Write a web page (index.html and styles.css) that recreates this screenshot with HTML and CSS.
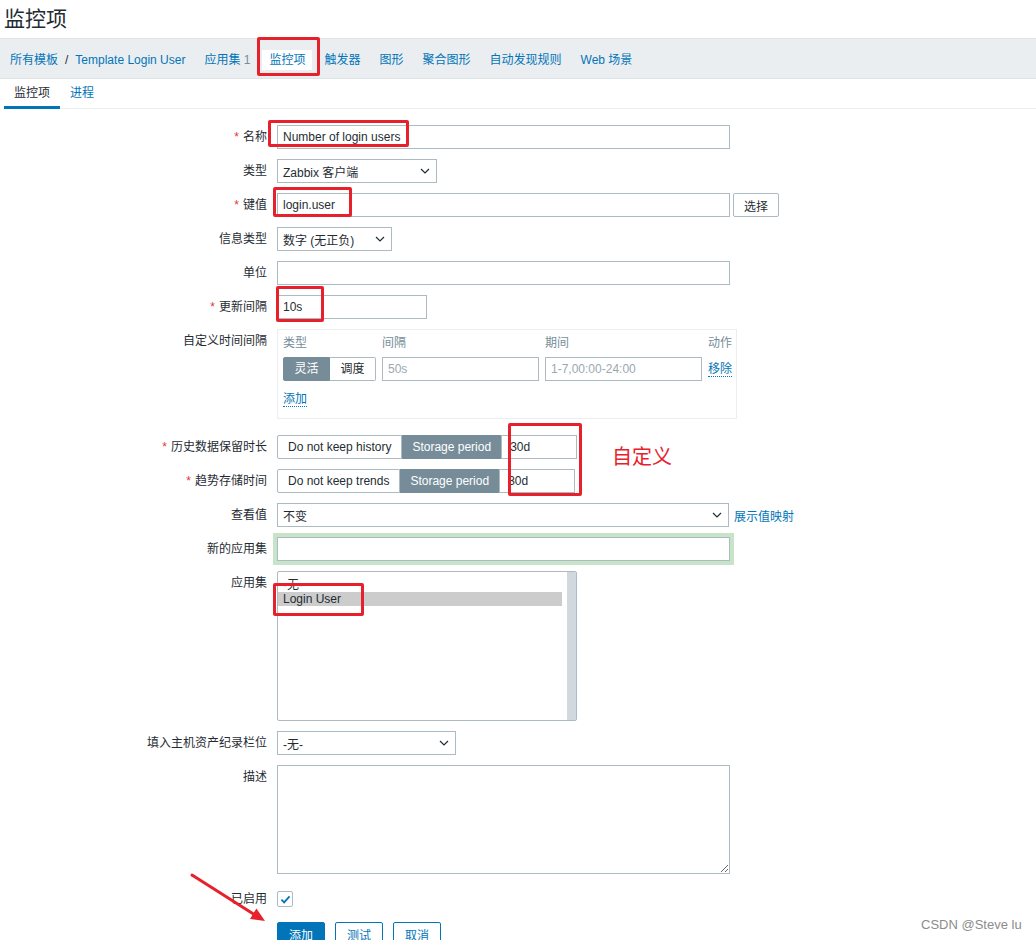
FILE: index.html
```html
<!DOCTYPE html>
<html lang="zh-CN">
<head>
  <meta charset="UTF-8">
  <meta name="viewport" content="width=device-width, initial-scale=1.0">
  <title>监控项</title>
  <link rel="stylesheet" href="styles.css">
</head>
<body>

  <h1 class="page-title">监控项</h1>

  <!-- object navigation -->
  <nav class="object-nav">
    <ul>
      <li class="breadcrumbs"><a href="#">所有模板</a><span class="sep">/</span><a href="#">Template Login User</a></li>
      <li><a href="#">应用集 <span class="count">1</span></a></li>
      <li class="selected"><a href="#">监控项</a></li>
      <li><a href="#">触发器</a></li>
      <li><a href="#">图形</a></li>
      <li><a href="#">聚合图形</a></li>
      <li><a href="#">自动发现规则</a></li>
      <li><a href="#">Web 场景</a></li>
    </ul>
  </nav>

  <div class="tabs">
    <a href="#" class="tab active">监控项</a>
    <a href="#" class="tab">进程</a>
  </div>

  <!-- ITEM FORM -->
  <form class="item-form">
    <ul class="form-list">
      <li class="form-row">
        <label class="form-label required">名称</label>
        <div class="form-field"><input class="input input-wide" type="text" value="Number of login users"></div>
      </li>
      <li class="form-row">
        <label class="form-label">类型</label>
        <div class="form-field">
          <div class="select select-type">Zabbix 客户端<svg viewBox="0 0 10 6"><path d="M1 1l4 4 4-4"/></svg></div>
        </div>
      </li>
      <li class="form-row">
        <label class="form-label required">键值</label>
        <div class="form-field">
          <input class="input input-wide" type="text" value="login.user">
          <button type="button" class="btn-alt btn-select">选择</button>
        </div>
      </li>
      <li class="form-row">
        <label class="form-label">信息类型</label>
        <div class="form-field">
          <div class="select select-info">数字 (无正负)<svg viewBox="0 0 10 6"><path d="M1 1l4 4 4-4"/></svg></div>
        </div>
      </li>
      <li class="form-row">
        <label class="form-label">单位</label>
        <div class="form-field"><input class="input input-wide" type="text"></div>
      </li>
      <li class="form-row">
        <label class="form-label required">更新间隔</label>
        <div class="form-field"><input class="input input-delay" type="text" value="10s"></div>
      </li>
      <li class="form-row row-intervals">
        <label class="form-label">自定义时间间隔</label>
        <div class="form-field">
          <div class="interval-box">
            <div class="interval-grid">
              <div class="col-head">类型</div>
              <div class="col-head">间隔</div>
              <div class="col-head">期间</div>
              <div class="col-head">动作</div>
              <div class="segmented">
                <span class="on">灵活</span><span>调度</span>
              </div>
              <input class="input" type="text" placeholder="50s">
              <input class="input" type="text" placeholder="1-7,00:00-24:00">
              <div class="cell-action"><a href="#" class="link-dotted">移除</a></div>
            </div>
            <a href="#" class="link-dotted add-link">添加</a>
          </div>
        </div>
      </li>
      <li class="form-row">
        <label class="form-label required">历史数据保留时长</label>
        <div class="form-field">
          <div class="segmented">
            <span>Do not keep history</span><span class="on">Storage period</span>
          </div>
          <input class="input input-period" type="text" value="30d">
        </div>
      </li>
      <li class="form-row">
        <label class="form-label required">趋势存储时间</label>
        <div class="form-field">
          <div class="segmented">
            <span>Do not keep trends</span><span class="on">Storage period</span>
          </div>
          <input class="input input-period" type="text" value="30d">
        </div>
      </li>
      <li class="form-row">
        <label class="form-label">查看值</label>
        <div class="form-field">
          <div class="select select-value">不变<svg viewBox="0 0 10 6"><path d="M1 1l4 4 4-4"/></svg></div>
          <a href="#" class="side-link">展示值映射</a>
        </div>
      </li>
      <li class="form-row">
        <label class="form-label">新的应用集</label>
        <div class="form-field"><input class="input input-wide focused" type="text"></div>
      </li>
      <li class="form-row">
        <label class="form-label">应用集</label>
        <div class="form-field">
          <div class="listbox">
            <div class="listbox-items">
              <div>-无-</div>
              <div class="picked">Login User</div>
            </div>
            <div class="listbox-scroll"></div>
          </div>
        </div>
      </li>
      <li class="form-row">
        <label class="form-label">填入主机资产纪录栏位</label>
        <div class="form-field">
          <div class="select select-inventory">-无-<svg viewBox="0 0 10 6"><path d="M1 1l4 4 4-4"/></svg></div>
        </div>
      </li>
      <li class="form-row row-description">
        <label class="form-label">描述</label>
        <div class="form-field"><textarea class="textarea"></textarea></div>
      </li>
      <li class="form-row row-check">
        <label class="form-label">已启用</label>
        <div class="form-field">
          <span class="checkbox"><svg viewBox="0 0 12 10"><path d="M1.5 5.2l3 3 6-6.6"/></svg></span>
        </div>
      </li>
    </ul>
    <div class="form-actions">
      <button type="button" class="btn btn-primary">添加</button>
      <button type="button" class="btn">测试</button>
      <button type="button" class="btn">取消</button>
    </div>
  </form>

  <!-- annotations drawn over the screenshot -->
  <div class="mark mark-tab"></div>
  <div class="mark mark-name"></div>
  <div class="mark mark-key"></div>
  <div class="mark mark-delay"></div>
  <div class="mark mark-period"></div>
  <div class="mark mark-app"></div>
  <div class="note">自定义</div>
  <svg class="arrow" width="90" height="65" viewBox="0 0 90 65">
    <line x1="7" y1="7" x2="70" y2="47" stroke="#e7212b" stroke-width="3" stroke-linecap="round"/>
    <polygon points="80,53 65,51 71.4,40.4" fill="#e7212b"/>
  </svg>
  <div class="watermark">CSDN @Steve lu</div>

</body>
</html>
```

FILE: styles.css
```css
* {
  box-sizing: border-box;
}
body {
  margin: 0;
  font-family: "Liberation Sans", Arial, "Noto Sans CJK SC", sans-serif;
  font-size: 12px;
  color: #1f2c33;
  background: #fff;
  position: relative;
  height: 940px;
  overflow: hidden;
}
a {
  color: #0275b8;
  text-decoration: none;
}
.page-title {
  margin: 0;
  height: 38px;
  line-height: 37px;
  padding-left: 4px;
  font-size: 21px;
  font-weight: normal;
}

/* top navigation */
.object-nav {
  height: 41px;
  background: #ebeef0;
  border-top: 1px solid #dfe4e7;
  border-bottom: 1px solid #dfe4e7;
  padding-top: 3px;
}
.object-nav ul {
  list-style: none;
  margin: 0;
  padding: 0 0 0 3px;
  height: 100%;
  display: flex;
  align-items: center;
  gap: 5px;
}
.object-nav li {
  padding: 0 7px;
  line-height: 20px;
}
.object-nav li.selected {
  background: #fff;
}
.object-nav .sep {
  margin: 0 7px;
  color: #1f2c33;
}
.object-nav .count {
  color: #768d99;
}

.tabs {
  margin-left: 4px;
  display: flex;
  border-bottom: 1px solid #ebeef0;
}
.tab {
  padding: 1px 10px 0;
  line-height: 26px;
  border-bottom: 3px solid transparent;
  margin-bottom: -1px;
}
.tab.active {
  color: #1f2c33;
  border-bottom-color: #0275b8;
}

/* form */
.item-form {
  margin-left: 4px;
  padding-top: 16px;
}
.form-list {
  list-style: none;
  margin: 0;
  padding: 0;
}
.form-row {
  display: flex;
  align-items: flex-start;
  margin-bottom: 10px;
}
.form-label {
  width: 263px;
  margin-right: 10px;
  text-align: right;
  line-height: 24px;
  white-space: nowrap;
}
.form-label.required::before {
  content: "*";
  color: #e33734;
  margin-right: 4px;
}
.form-field {
  display: flex;
  align-items: center;
}
.input {
  height: 24px;
  border: 1px solid #acbbc2;
  padding: 0 5px;
  font: inherit;
  color: #1f2c33;
  background: #fff;
  outline: none;
}
.input::placeholder {
  color: #9aa8b0;
}
.input-wide {
  width: 453px;
}
.input-delay {
  width: 150px;
}
.input-period {
  width: 76px;
  margin-left: -1px;
  padding-left: 8px;
}
.input.focused {
  box-shadow: 0 0 0 4px #c8e4c8;
}
.select {
  height: 24px;
  border: 1px solid #acbbc2;
  padding: 0 6px 0 5px;
  display: flex;
  align-items: center;
  justify-content: space-between;
  background: #fff;
}
.select svg {
  width: 10px;
  height: 6px;
  fill: none;
  stroke: #1f2c33;
  stroke-width: 1.2;
}
.select-type {
  width: 160px;
}
.select-info {
  width: 115px;
}
.select-value {
  width: 452px;
}
.select-inventory {
  width: 179px;
}
.side-link {
  margin-left: 5px;
}
.btn-alt {
  height: 24px;
  padding: 0 10px;
  border: 1px solid #acbbc2;
  border-radius: 2px;
  background: #fff;
  font: inherit;
  color: #1f2c33;
}
.btn-select {
  margin-left: 3px;
}

.segmented {
  display: flex;
}
.segmented span {
  height: 24px;
  line-height: 22px;
  padding: 0 10px;
  border: 1px solid #acbbc2;
  background: #fff;
  white-space: nowrap;
  text-align: center;
}
.segmented span + span {
  border-left: 0;
}
.segmented span:first-child {
  border-radius: 2px 0 0 2px;
}
.segmented span:last-child {
  border-radius: 0 2px 2px 0;
}
.segmented .on {
  background: #768d99;
  border-color: #768d99;
  color: #fff;
}

/* custom intervals */
.row-intervals {
  margin-bottom: 16px;
}
.interval-box {
  width: 460px;
  border: 1px solid #ebeef0;
  padding: 4px 4px 11px 5px;
}
.interval-grid {
  display: grid;
  grid-template-columns: 93px 157px 157px 1fr;
  column-gap: 6px;
  row-gap: 5px;
}
.interval-grid .input {
  width: 100%;
}
.col-head {
  color: #768d99;
  line-height: 18px;
  white-space: nowrap;
}
.interval-grid .col-head:nth-child(4) {
  text-align: right;
}
.interval-grid .segmented span {
  flex: 1;
  padding: 0;
}
.cell-action {
  display: flex;
  align-items: center;
  justify-content: flex-end;
  white-space: nowrap;
}
.link-dotted {
  display: inline-block;
  line-height: 14px;
  border-bottom: 1px dotted #0275b8;
}
.add-link {
  margin-top: 11px;
}

/* applications list */
.listbox {
  width: 300px;
  height: 150px;
  border: 1px solid #acbbc2;
  border-radius: 2px;
  display: flex;
  overflow: hidden;
}
.listbox-items {
  flex: 1;
  padding: 6px 5px 0 0;
}
.listbox-items div {
  padding-left: 5px;
  line-height: 14px;
}
.listbox-items .picked {
  background: #ccc;
}
.listbox-scroll {
  width: 9px;
  background: #d1d9de;
}

.textarea {
  width: 453px;
  height: 109px;
  border: 1px solid #acbbc2;
  font: inherit;
  padding: 5px;
  resize: both;
}
.row-description {
  margin-bottom: 16px;
}
.row-check {
  margin-bottom: 14px;
}
.row-check .form-label {
  line-height: 18px;
}
.row-check .form-field {
  height: 18px;
}
.checkbox {
  width: 16px;
  height: 16px;
  border: 1px solid #acbbc2;
  border-radius: 2px;
  display: flex;
  align-items: center;
  justify-content: center;
}
.checkbox svg {
  width: 11px;
  height: 9px;
  fill: none;
  stroke: #0275b8;
  stroke-width: 2;
}

.form-actions {
  padding-left: 273px;
  display: flex;
  gap: 10px;
}
.btn {
  height: 24px;
  padding: 0 11px;
  border: 1px solid #0275b8;
  border-radius: 2px;
  background: #fff;
  color: #0275b8;
  font: inherit;
}
.btn-primary {
  background: #0275b8;
  color: #fff;
}

/* red annotations */
.mark {
  position: absolute;
  border: 3px solid #e7212b;
  border-radius: 2px;
}
.mark-tab {
  left: 257px;
  top: 37px;
  width: 63px;
  height: 39px;
}
.mark-name {
  left: 268px;
  top: 120px;
  width: 141px;
  height: 27px;
}
.mark-key {
  left: 273px;
  top: 187px;
  width: 79px;
  height: 30px;
}
.mark-delay {
  left: 276px;
  top: 286px;
  width: 48px;
  height: 36px;
}
.mark-period {
  left: 508px;
  top: 423px;
  width: 74px;
  height: 73px;
}
.mark-app {
  left: 273px;
  top: 583px;
  width: 91px;
  height: 33px;
}
.note {
  position: absolute;
  left: 612px;
  top: 446px;
  font-size: 20px;
  line-height: 22px;
  color: #e7212b;
}
.arrow {
  position: absolute;
  left: 185px;
  top: 868px;
}
.watermark {
  position: absolute;
  left: 921px;
  top: 917px;
  font-size: 13px;
  line-height: 16px;
  color: #8c8c8c;
}
```
